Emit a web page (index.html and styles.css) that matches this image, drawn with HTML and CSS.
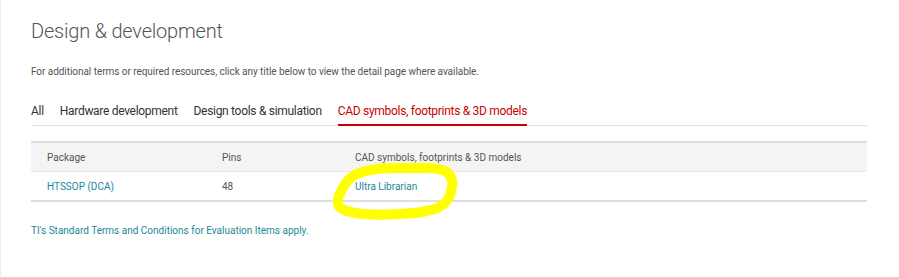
FILE: index.html
```html
<!DOCTYPE html>
<html lang="en">
<head>
    <meta charset="UTF-8">
    <meta name="viewport" content="width=device-width, initial-scale=1.0">
    <title>Design &amp; development</title>
    <link rel="stylesheet" href="styles.css">
</head>
<body>
    <div class="page">
        <h2 class="title">Design &amp; development</h2>
        <p class="intro">For additional terms or required resources, click any title below to view the detail page where available.</p>

        <div class="tabs">
            <a class="tab" href="#">All</a>
            <a class="tab" href="#">Hardware development</a>
            <a class="tab" href="#">Design tools &amp; simulation</a>
            <a class="tab active" href="#">CAD symbols, footprints &amp; 3D models</a>
        </div>

        <table class="cad-table">
            <thead>
                <tr>
                    <th class="col-pkg">Package</th>
                    <th class="col-pins">Pins</th>
                    <th>CAD symbols, footprints &amp; 3D models</th>
                </tr>
            </thead>
            <tbody>
                <tr>
                    <td><a class="link" href="#">HTSSOP (DCA)</a></td>
                    <td>48</td>
                    <td><a class="link" href="#">Ultra Librarian</a></td>
                </tr>
            </tbody>
        </table>

        <p class="terms"><a class="link" href="#">TI's Standard Terms and Conditions for Evaluation Items apply.</a></p>
    </div>

    <!-- hand drawn marker over the Ultra Librarian link -->
    <svg class="marker" width="135" height="65" viewBox="0 0 135 65">
        <path d="M 15 33 C 20 19, 30 10, 65 9 L 100 9 C 120 9, 128 15, 126 28 C 124 45, 115 53, 75 55 C 40 57, 13 54, 12 45 C 11 40, 13 36, 15 33 Z"
              fill="none" stroke="#ffff00" stroke-width="10" stroke-linecap="round" stroke-linejoin="round"/>
    </svg>
</body>
</html>
```

FILE: styles.css
```css
body {
    margin: 0;
    min-height: 277px;
    background: #fff;
    border-left: 1px solid #ececec;
    font-family: Roboto, "Liberation Sans", sans-serif;
    position: relative;
}
.page {
    width: 836px;
    padding: 19px 0 0 30px;
}
.title {
    margin: 0;
    font-size: 20px;
    font-weight: 300;
    letter-spacing: -0.2px;
    line-height: 24px;
    color: #555;
}
.intro {
    margin: 21px 0 0;
    font-size: 10px;
    letter-spacing: -0.05px;
    line-height: 16px;
    color: #555;
}
.tabs {
    display: flex;
    gap: 16px;
    margin-top: 22px;
    border-bottom: 1px solid #e2e2e2;
}
.tab {
    font-size: 12px;
    letter-spacing: -0.3px;
    line-height: 18px;
    color: #333;
    text-decoration: none;
    padding-bottom: 4px;
    border-bottom: 2px solid transparent;
    margin-bottom: -1px;
}
.tab.active {
    color: #cc0000;
    border-bottom-color: #cc0000;
}
.cad-table {
    width: 100%;
    margin-top: 15px;
    border-collapse: collapse;
    font-size: 10px;
    color: #555;
}
.cad-table thead tr {
    background: #f4f4f4;
    border-top: 2px solid #dedede;
    border-bottom: 1px solid #e8e8e8;
}
.cad-table tbody tr {
    border-bottom: 2px solid #dedede;
}
.cad-table th,
.cad-table td {
    text-align: left;
    font-weight: 400;
    padding: 0 0 0 16px;
    height: 28px;
}
.col-pkg {
    width: 159px;
}
.col-pins {
    width: 117px;
}
.link {
    color: #1a8898;
    text-decoration: none;
}
.terms {
    margin: 21px 0 0;
    font-size: 10px;
    line-height: 16px;
}
.marker {
    position: absolute;
    left: 325px;
    top: 159px;
}
```
